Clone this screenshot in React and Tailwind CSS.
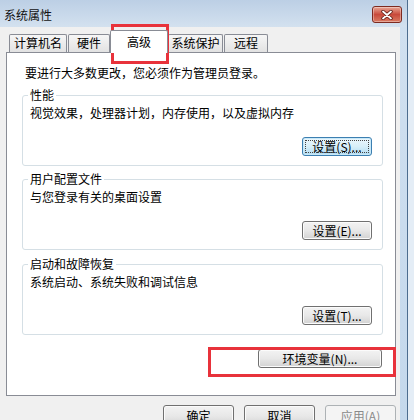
const Btn = ({ children, w = "w-[70px]", h = "h-[19px]", focused, disabled }) => {
  let look =
    "border-[#707070] bg-linear-to-b from-[#f3f3f3] via-[#e8e8e8] to-[#d2d2d2] text-black shadow-[inset_0_0_0_1px_#fbfbfb]";
  if (focused)
    look =
      "border-[#3c7fb1] bg-linear-to-b from-[#ecf7fd] via-[#d8eff9] to-[#b0dbf2] text-black shadow-[inset_0_0_0_1px_#c8e8f8]";
  if (disabled) look = "border-[#adb2b5] bg-[#f4f4f4] text-[#8a8a8a]";

  return (
    <div
      className={`relative flex items-center justify-center shrink-0 rounded-[3px] border leading-[14px] ${w} ${h} ${look}`}
    >
      {children}
      {focused && (
        <span className="absolute inset-[2px] border border-dotted border-[#444]" />
      )}
    </div>
  );
};

const Tab = ({ children, w, gap }) => (
  <div
    className={`h-[18px] flex justify-center pt-[1px] leading-[14px] border border-b-0 border-[#898c95] rounded-t-[2px] bg-linear-to-b from-[#f6f6f6] to-[#e2e2e2] ${w} ${gap}`}
  >
    {children}
  </div>
);

const Group = ({ title, desc, btn, focused, className }) => (
  <fieldset
    className={`ml-[15px] w-[361px] border border-[#d5dfe5] rounded-[3px] px-[7px] pt-[4px] pb-[9px] ${className}`}
  >
    <legend className="-ml-[2px] px-[2px] leading-[14px]">{title}</legend>
    <p className="leading-[14px]">{desc}</p>
    <div className="flex justify-end pr-[3px] mt-[17px]">
      <Btn focused={focused}>{btn}</Btn>
    </div>
  </fieldset>
);

export default function App() {
  return (
    <div className="relative w-[414px] h-[420px] overflow-hidden flex font-['Noto_Sans_CJK_SC',sans-serif] text-[12px] text-black">
      <div className="w-[408px] h-full flex flex-col border-r border-[#4d6d8f]">
        {/* title bar */}
        <div className="h-[27px] shrink-0 flex justify-between bg-linear-to-b from-[#bccfe5] to-[#d3e1ef]">
          <span className="pl-[4px] pt-[8px] leading-[14px] text-[#111]">系统属性</span>
          <div className="mt-[6px] mr-[5px] w-[30px] h-[17px] rounded-[3px] border border-[#7d2a20] bg-linear-to-b from-[#e8a696] via-[#c8493b] to-[#d97a62] flex items-center justify-center shadow-[inset_0_0_0_1px_rgba(255,255,255,0.35)]">
            <svg width="12" height="10" viewBox="0 0 12 10">
              <path d="M2 1.5 L10 8.5 M10 1.5 L2 8.5" stroke="#5a1a12" strokeWidth="3.4" strokeLinecap="round" />
              <path d="M2 1.5 L10 8.5 M10 1.5 L2 8.5" stroke="#fff" strokeWidth="1.8" strokeLinecap="round" />
            </svg>
          </div>
        </div>

        <div className="flex-1 flex min-h-0">
          <div className="w-[400px] bg-[#f0f0f0] flex flex-col">
            {/* tabs */}
            <div className="h-[25px] shrink-0 flex items-end pl-[9px]">
              <Tab w="w-[58px]">计算机名</Tab>
              <Tab w="w-[42px]" gap="ml-[1px]">硬件</Tab>
              <div className="relative z-10 w-[58px] h-[23px] -mb-px flex justify-center pt-[4px] leading-[14px] border border-b-0 border-[#898c95] rounded-t-[2px] bg-white">
                高级
              </div>
              <Tab w="w-[55px]">系统保护</Tab>
              <Tab w="w-[44px]" gap="ml-[1px]">远程</Tab>
            </div>

            {/* panel */}
            <div className="ml-[6px] w-[390px] h-[344px] shrink-0 border border-[#898c95] bg-white flex flex-col">
              <p className="pl-[18px] pt-[13px] leading-[14px]">要进行大多数更改，您必须作为管理员登录。</p>
              <Group
                className="mt-[8px]"
                title="性能"
                desc="视觉效果，处理器计划，内存使用，以及虚拟内存"
                btn="设置(S)..."
                focused
              />
              <Group
                className="mt-[6px]"
                title="用户配置文件"
                desc="与您登录有关的桌面设置"
                btn="设置(E)..."
              />
              <Group
                className="mt-[7px]"
                title="启动和故障恢复"
                desc="系统启动、系统失败和调试信息"
                btn="设置(T)..."
              />
              <div className="flex justify-end pr-[13px] mt-[14px]">
                <Btn w="w-[124px]">环境变量(N)...</Btn>
              </div>
            </div>

            {/* dialog buttons */}
            <div className="flex justify-end gap-[10px] pr-[4px] mt-[9px]">
              <Btn w="w-[71px]" h="h-[22px]">确定</Btn>
              <Btn w="w-[71px]" h="h-[22px]">取消</Btn>
              <Btn w="w-[71px]" h="h-[22px]" disabled>应用(A)</Btn>
            </div>
          </div>
          <div className="flex-1 bg-linear-to-b from-[#d0e0f0] to-[#c4d8ec]" />
        </div>
      </div>
      <div className="flex-1 bg-[#e4edf6]" />

      {/* red annotation boxes */}
      <div className="absolute left-[111px] top-[24px] w-[58px] h-[40px] border-[3px] border-[#e8323b]" />
      <div className="absolute left-[208px] top-[347px] w-[188px] h-[30px] border-[3px] border-[#e8323b]" />
    </div>
  );
}
